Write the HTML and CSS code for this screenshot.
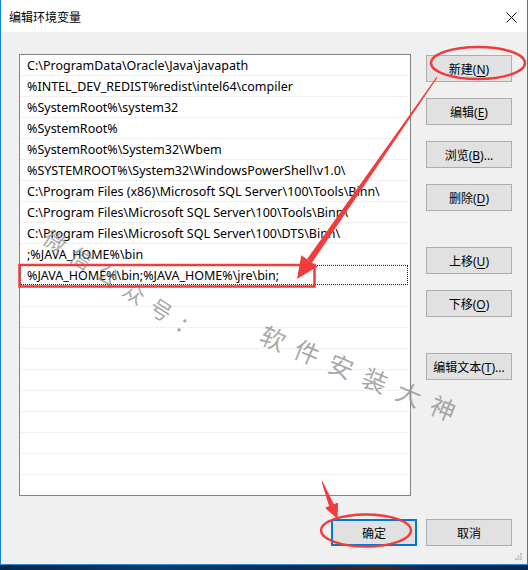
FILE: index.html
```html
<!DOCTYPE html>
<html>
<head>
<meta charset="utf-8">
<title>编辑环境变量</title>
<link rel="stylesheet" href="styles.css">
</head>
<body>
<div class="window">
  <div class="titlebar">
    <span class="title">编辑环境变量</span>
    <svg class="close" width="11" height="11" viewBox="0 0 11 11"><path d="M0.5 0.5L10.5 10.5M10.5 0.5L0.5 10.5" stroke="#111" stroke-width="1"/></svg>
  </div>
  <div class="body">
    <div class="main">
      <div class="listbox">
        <div class="row">C:\ProgramData\Oracle\Java\javapath</div>
        <div class="row">%INTEL_DEV_REDIST%redist\intel64\compiler</div>
        <div class="row">%SystemRoot%\system32</div>
        <div class="row">%SystemRoot%</div>
        <div class="row">%SystemRoot%\System32\Wbem</div>
        <div class="row">%SYSTEMROOT%\System32\WindowsPowerShell\v1.0\</div>
        <div class="row">C:\Program Files (x86)\Microsoft SQL Server\100\Tools\Binn\</div>
        <div class="row">C:\Program Files\Microsoft SQL Server\100\Tools\Binn\</div>
        <div class="row">C:\Program Files\Microsoft SQL Server\100\DTS\Binn\</div>
        <div class="row">;%JAVA_HOME%\bin</div>
        <div class="row focus">%JAVA_HOME%\bin;%JAVA_HOME%\jre\bin;</div>
        <div class="row"></div>
        <div class="row"></div>
        <div class="row"></div>
        <div class="row"></div>
        <div class="row"></div>
        <div class="row"></div>
        <div class="row"></div>
        <div class="row"></div>
        <div class="row"></div>
        <div class="row"></div>
      </div>
      <div class="side">
        <button class="btn">新建(<u>N</u>)</button>
        <button class="btn">编辑(<u>E</u>)</button>
        <button class="btn">浏览(<u>B</u>)...</button>
        <button class="btn">删除(<u>D</u>)</button>
        <button class="btn spaced">上移(<u>U</u>)</button>
        <button class="btn">下移(<u>O</u>)</button>
        <button class="btn spaced">编辑文本(<u>T</u>)...</button>
      </div>
    </div>
    <div class="footer">
      <button class="btn default">确定</button>
      <button class="btn">取消</button>
    </div>
  </div>
  <svg class="grip" width="7" height="7" viewBox="0 0 7 7">
    <rect x="5" y="0" width="2" height="2" fill="#c4c4c4"/>
    <rect x="2.5" y="2.5" width="2" height="2" fill="#c4c4c4"/>
    <rect x="5" y="2.5" width="2" height="2" fill="#c4c4c4"/>
    <rect x="0" y="5" width="2" height="2" fill="#c4c4c4"/>
    <rect x="2.5" y="5" width="2" height="2" fill="#c4c4c4"/>
    <rect x="5" y="5" width="2" height="2" fill="#c4c4c4"/>
  </svg>
</div>
<div class="taskbar"></div>
<div class="watermark wm-a">微信公众号：</div>
<div class="watermark wm-b">软件安装大神</div>
<svg class="annot" width="528" height="570" viewBox="0 0 528 570">
  <ellipse cx="478" cy="63" rx="47" ry="16" fill="none" stroke="#f03c3c" stroke-width="2.5"/>
  <polygon points="437.5,77.5 436.5,77 307,259.2 312,262.7" fill="#f03c3c"/>
  <polygon points="297,279 301.3,255.2 317.7,266.6" fill="#f03c3c"/>
  <rect x="19.5" y="265" width="295" height="21.5" fill="none" stroke="#f03c3c" stroke-width="2.5"/>
  <ellipse cx="366" cy="530.5" rx="45" ry="16" fill="none" stroke="#f03c3c" stroke-width="2.5"/>
  <polygon points="322.6,481.5 321.6,482 329.2,506.4 334,504.4" fill="#f03c3c"/>
  <polygon points="337.5,519 325.1,507.8 338.1,502.4" fill="#f03c3c"/>
</svg>
</body>
</html>
```

FILE: styles.css
```css
html, body {
  margin: 0;
  padding: 0;
}
body {
  width: 528px;
  height: 570px;
  overflow: hidden;
  position: relative;
  background: #0f2b4a;
  font-family: "Noto Sans", "Noto Sans CJK SC", sans-serif;
  font-size: 12px;
  color: #000;
}
.window {
  position: relative;
  box-sizing: border-box;
  height: 565px;
  display: flex;
  flex-direction: column;
  background: #f0f0f0;
  border-left: 1px solid #1883d7;
  border-right: 1px solid #1883d7;
  border-bottom: 1px solid #2b8ad8;
}
.titlebar {
  height: 32px;
  flex: none;
  background: #fff;
  display: flex;
  align-items: center;
  padding-left: 8px;
  padding-right: 10px;
}
.title {
  font-family: "Noto Sans CJK SC", sans-serif;
  font-size: 12px;
  margin-top: 1px;
}
.close {
  margin-left: auto;
  margin-top: 2px;
}
.body {
  flex: 1;
  padding: 22px 15px 0 18px;
  display: flex;
  flex-direction: column;
}
.main {
  display: flex;
  gap: 15px;
}
.listbox {
  width: 392px;
  height: 442px;
  box-sizing: border-box;
  border: 1px solid #838383;
  background: #fff;
  overflow: hidden;
  flex: none;
}
.row {
  position: relative;
  height: 21px;
  box-sizing: border-box;
  margin: 0 1px;
  padding-left: 6px;
  border-bottom: 1px solid #f0f0f0;
  line-height: 22px;
  white-space: nowrap;
  font-size: 12.5px;
}
.row.focus::after {
  content: "";
  position: absolute;
  left: -1px;
  right: 1px;
  top: 0;
  bottom: 0;
  border: 1px dotted #222;
}
.side {
  width: 86px;
  display: flex;
  flex-direction: column;
  padding-top: 1px;
}
.btn {
  width: 86px;
  height: 27px;
  box-sizing: border-box;
  border: 1px solid #adadad;
  background: #e1e1e1;
  font-family: "Noto Sans", "Noto Sans CJK SC", sans-serif;
  font-size: 12px;
  color: #000;
  padding: 0;
  margin: 0;
  flex: none;
}
.side .btn {
  margin-bottom: 16px;
}
.side .btn.spaced {
  margin-top: 20px;
}
.btn u {
  text-decoration: underline;
  text-underline-offset: 2px;
}
.btn.default {
  border: 2px solid #0078d7;
}
.footer {
  display: flex;
  justify-content: flex-end;
  gap: 9px;
  margin-top: 23px;
}
.grip {
  position: absolute;
  right: 5px;
  bottom: 4px;
}
.taskbar {
  height: 5px;
  background: linear-gradient(90deg, #0d2642 0%, #153a63 30%, #0f2d50 55%, #3a2a2a 72%, #0f2d50 80%, #0c2644 100%);
}
.watermark {
  position: absolute;
  font-family: "Noto Sans CJK SC", sans-serif;
  line-height: 34px;
  color: rgba(140, 140, 140, 0.75);
  white-space: nowrap;
  pointer-events: none;
}
.wm-a {
  left: 45px;
  top: 223px;
  font-size: 22px;
  letter-spacing: 9.5px;
  transform-origin: 11px 50%;
  transform: rotate(33deg);
}
.wm-b {
  left: 261px;
  top: 320px;
  font-size: 25px;
  letter-spacing: 11.8px;
  transform-origin: 12.5px 50%;
  transform: rotate(22.4deg);
}
.annot {
  position: absolute;
  left: 0;
  top: 0;
  pointer-events: none;
}
```
